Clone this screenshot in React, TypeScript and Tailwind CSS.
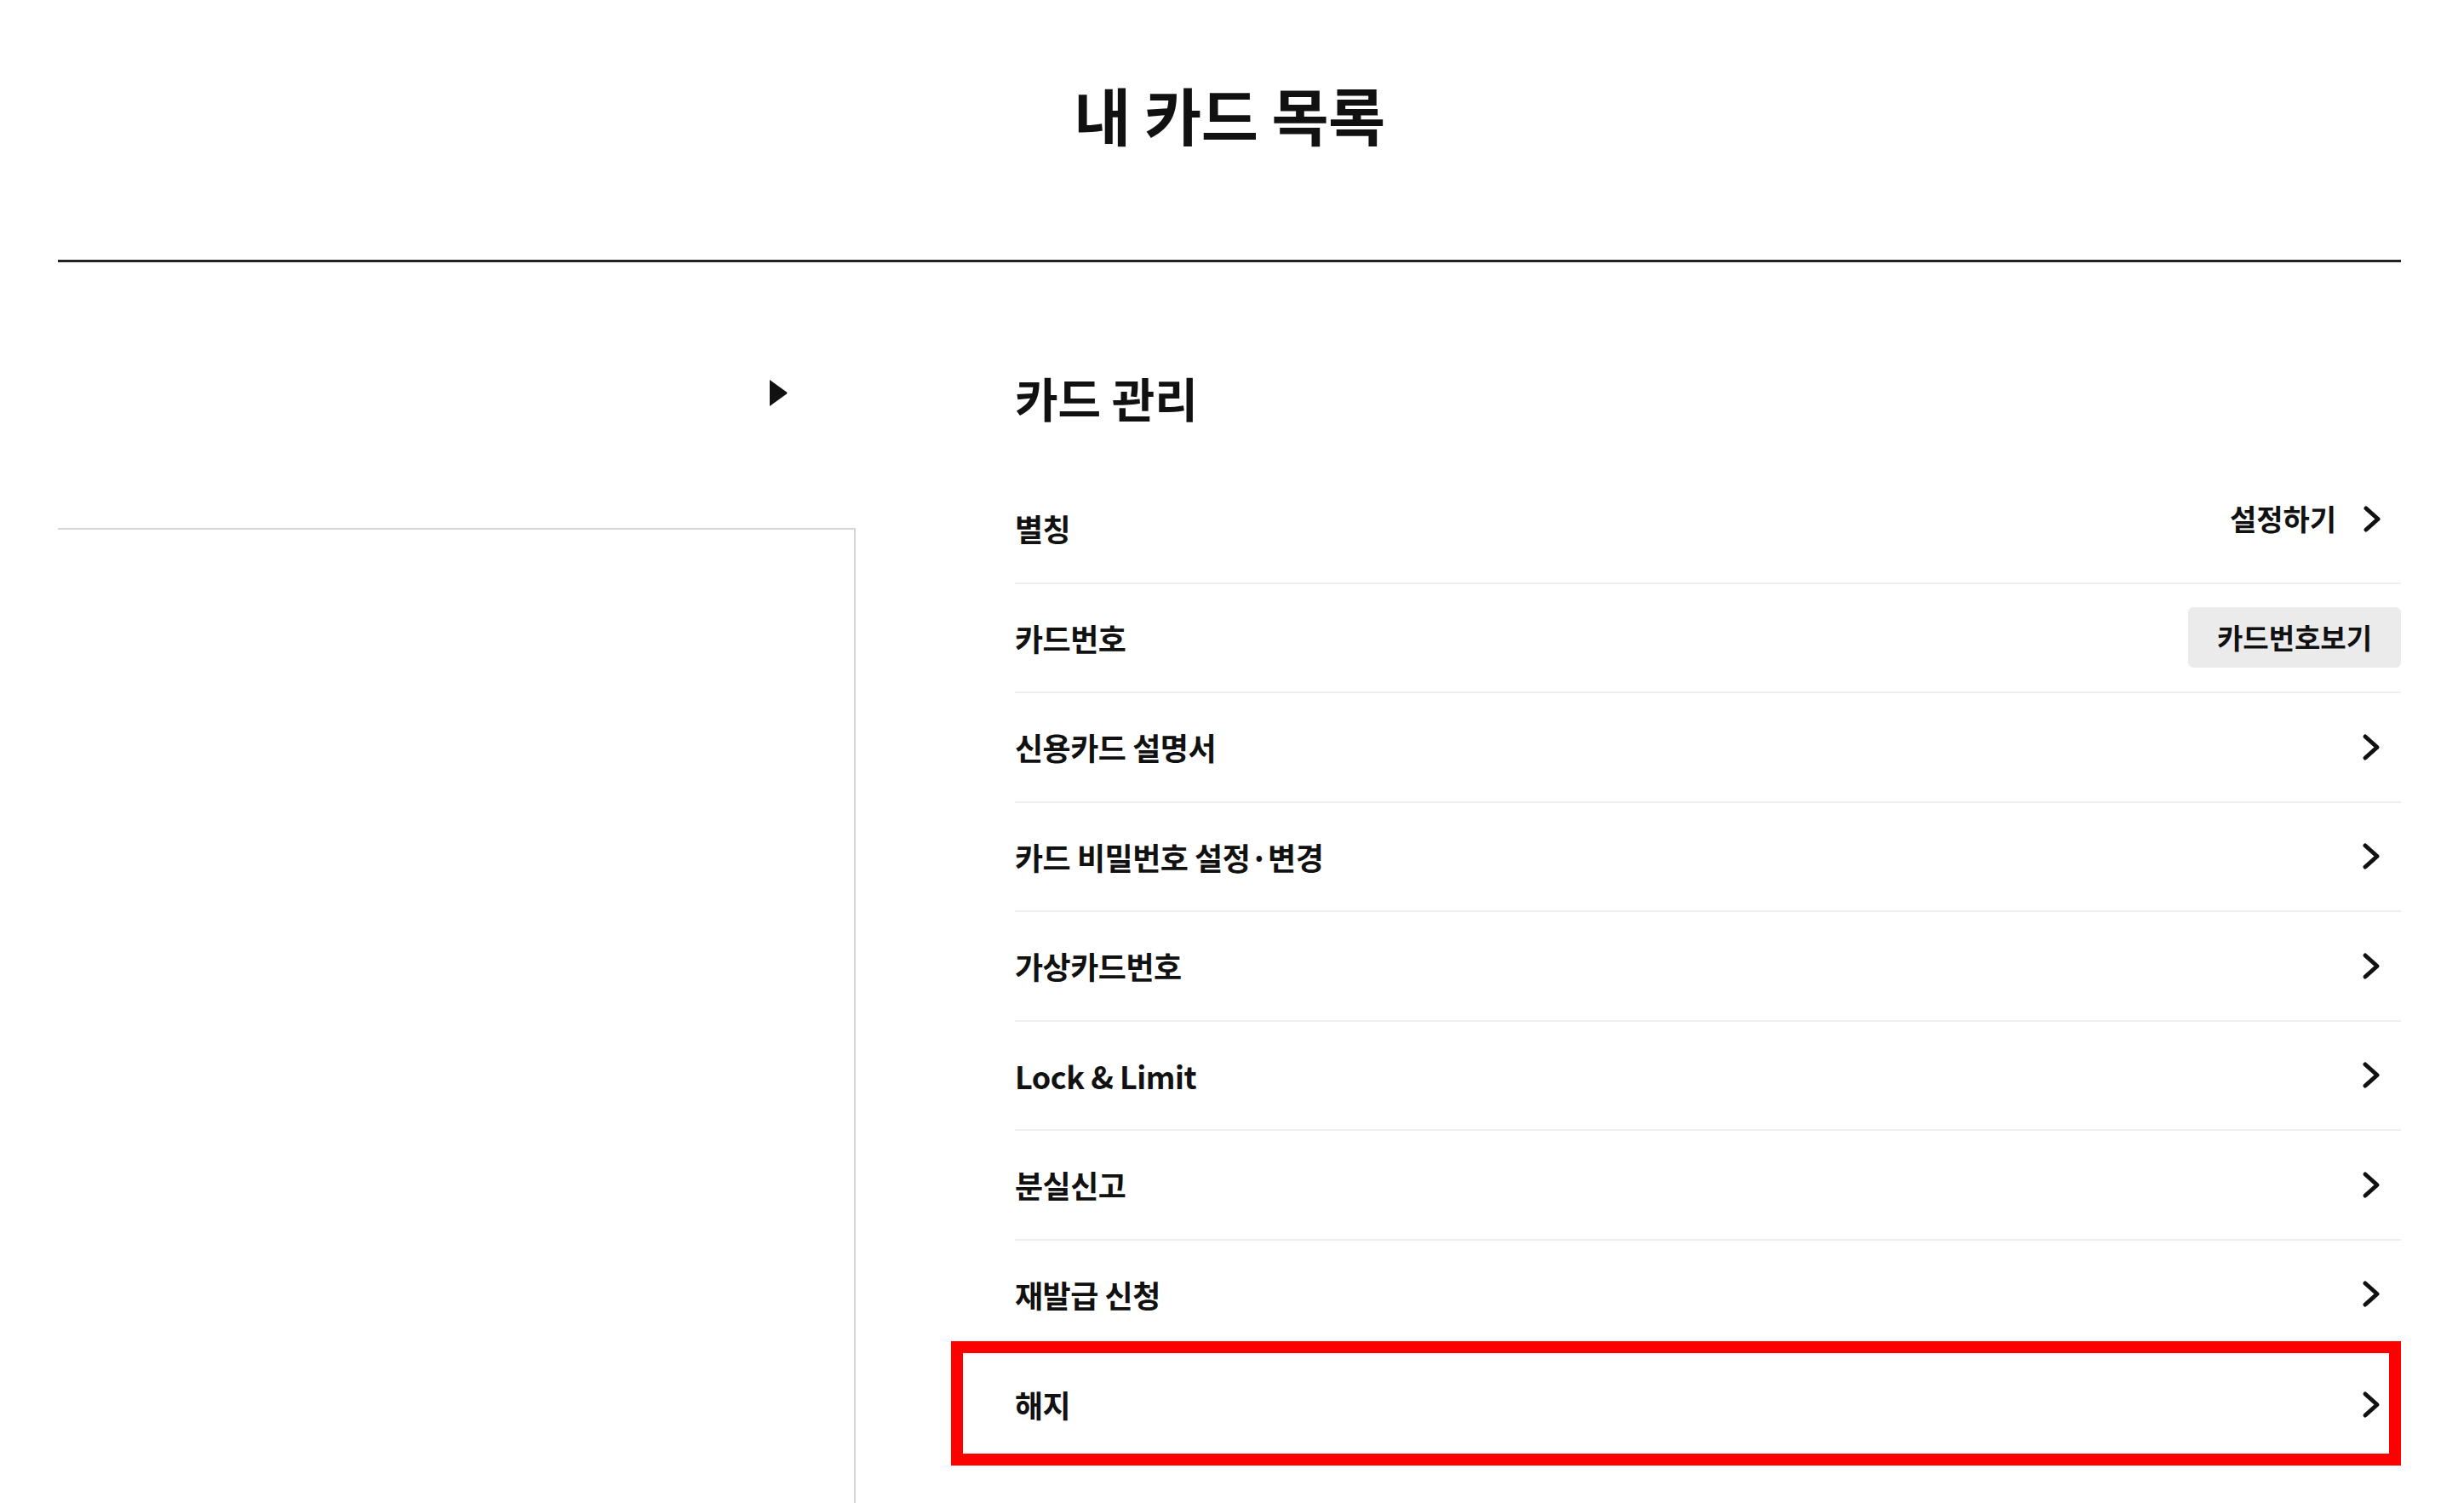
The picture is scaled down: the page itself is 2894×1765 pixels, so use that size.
import type { ReactNode } from 'react'

interface Row {
  label: string
  right?: 'link' | 'button'
  marked?: boolean
}

const ROWS: Row[] = [
  { label: '별칭', right: 'link' },
  { label: '카드번호', right: 'button' },
  { label: '신용카드 설명서' },
  { label: '카드 비밀번호 설정·변경' },
  { label: '가상카드번호' },
  { label: 'Lock & Limit' },
  { label: '분실신고' },
  { label: '재발급 신청' },
  { label: '해지', marked: true },
]

function Chevron() {
  return (
    <svg width="24" height="35" viewBox="0 0 24 35" className="shrink-0">
      <polyline
        points="5,5 19,17.5 5,30"
        fill="none"
        stroke="#111"
        strokeWidth="5"
        strokeLinecap="round"
        strokeLinejoin="round"
      />
    </svg>
  )
}

function RightSide({ kind }: { kind?: Row['right'] }): ReactNode {
  if (kind === 'link') {
    return (
      <span className="mb-[22px] flex items-center gap-[30px] pr-[22px]">
        <span className="text-[34px] font-bold leading-none">설정하기</span>
        <Chevron />
      </span>
    )
  }
  if (kind === 'button') {
    return (
      <button
        type="button"
        className="h-[71px] w-[250px] rounded-[6px] bg-[#ebebeb] text-[33px] font-bold leading-none text-[#111]"
      >
        카드번호보기
      </button>
    )
  }
  return (
    <span className="pr-[23px]">
      <Chevron />
    </span>
  )
}

export default function App() {
  return (
    <div className="min-h-screen bg-white pl-[68px] pr-[74px] font-['Noto_Sans_CJK_KR','Noto_Sans',sans-serif] text-[#111]">
      <header className="flex h-[308px] justify-center border-b-[3px] border-[#222] pt-[97px]">
        <h1 className="text-[73px] font-bold leading-none tracking-[-0.5px]">내 카드 목록</h1>
      </header>

      <div className="flex">
        {/* left: card picker */}
        <aside className="w-[937px] shrink-0">
          <div className="flex justify-end pr-[80px] pt-[137px]">
            <svg width="22" height="33" viewBox="0 0 22 33">
              <path d="M1 1 L21 15.5 Q22 16.5 21 17.5 L1 32 Z" fill="#111" />
            </svg>
          </div>
          <div className="mt-[142px] h-[1145px] border-r-2 border-t-2 border-[#d6d6d6]" />
        </aside>

        {/* right: card management */}
        <section className="ml-[187px] flex-1">
          <h2 className="flex h-[249px] items-center pt-[67px] text-[55px] font-bold leading-none">
            카드 관리
          </h2>
          <ul>
            {ROWS.map((row) => (
              <li
                key={row.label}
                className={`relative flex h-[128.5px] items-center justify-between ${
                  row.marked ? '' : 'border-b-2 border-[#efefef]'
                }`}
              >
                <span className="text-[36px] font-semibold leading-none tracking-[-0.5px]">{row.label}</span>
                <RightSide kind={row.right} />
                {row.marked && (
                  <span className="pointer-events-none absolute -left-[75px] -top-[10px] right-0 h-[146px] border-[14px] border-[#ff0000]" />
                )}
              </li>
            ))}
          </ul>
        </section>
      </div>
    </div>
  )
}
